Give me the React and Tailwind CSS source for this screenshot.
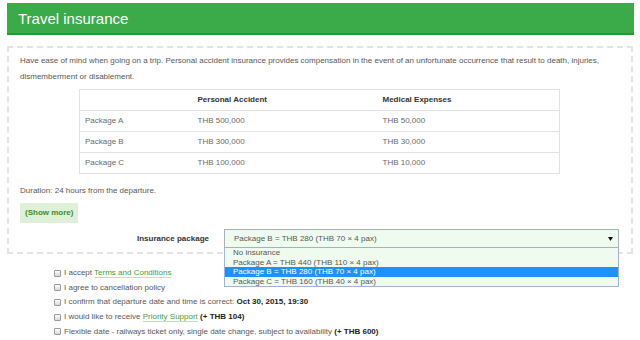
import React from "react";

const packages = [
  { name: "Package A", accident: "THB 500,000", medical: "THB 50,000" },
  { name: "Package B", accident: "THB 300,000", medical: "THB 30,000" },
  { name: "Package C", accident: "THB 100,000", medical: "THB 10,000" },
];

const options = [
  "No insurance",
  "Package A = THB 440 (THB 110 × 4 pax)",
  "Package B = THB 280 (THB 70 × 4 pax)",
  "Package C = THB 160 (THB 40 × 4 pax)",
];

const Check = () => (
  <span className="inline-block w-[7px] h-[7px] mr-[3px] border border-[#9a9a9a] rounded-[1px] bg-gradient-to-b from-white to-[#d8d8d8] shrink-0"></span>
);

const GreenLink = ({ children }) => (
  <span className="text-[#4a9a3e] border-b border-[#bfe0b8]">{children}</span>
);

const App = () => {
  const selected = 2;

  return (
    <div className="w-[640px] h-[340px] overflow-hidden bg-white pt-[3px] pl-[7px] font-['Liberation_Sans',Arial,sans-serif] text-[8px] text-[#585858]">
      {/* header */}
      <div className="w-[627px] h-[32px] bg-[#3bab4a] border-b-2 border-[#1c9f2d] pl-[11px] flex items-center">
        <h1 className="text-[15px] leading-none text-white">Travel insurance</h1>
      </div>

      {/* dashed info box */}
      <div className="w-[626px] mt-[11px] border-2 border-dashed border-[#e4e4e4] pl-[11px] pr-[12px] pt-[5px] pb-[4px]">
        <p className="leading-[16px]">
          Have ease of mind when going on a trip. Personal accident insurance provides compensation in the event of an
          unfortunate occurrence that result to death, injuries, dismemberment or disablement.
        </p>

        <table className="mt-[4px] mx-auto w-[481px] border border-[#e2e2e2] border-collapse">
          <tbody>
            <tr className="h-[21px] border-b border-[#e2e2e2]">
              <td className="w-[113px]"></td>
              <td className="w-[185px] pl-[5px] font-bold text-[#333]">Personal Accident</td>
              <td className="pl-[5px] font-bold text-[#333]">Medical Expenses</td>
            </tr>
            {packages.map((p, i) => (
              <tr key={i} className="h-[21px] border-b border-[#e2e2e2] text-[#6a6a6a]">
                <td className="pl-[5px]">{p.name}</td>
                <td className="pl-[5px]">{p.accident}</td>
                <td className="pl-[5px]">{p.medical}</td>
              </tr>
            ))}
          </tbody>
        </table>

        <p className="mt-[9px] leading-[16px]">Duration: 24 hours from the departure.</p>

        <div className="mt-[4px]">
          <span className="inline-block h-[20px] leading-[20px] px-[5px] bg-[#dff0d8] font-bold text-[#3c8d1f]">
            (Show more)
          </span>
        </div>

        <div className="mt-[6px] flex items-center">
          <div className="w-[189px] text-right font-bold text-[#333]">Insurance package</div>
          <div className="relative ml-[15px] w-[395px]">
            <div className="h-[19px] border border-[#a8b0b8] bg-[#effbee] pl-[9px] pr-[5px] flex items-center justify-between">
              <span>{options[selected]}</span>
              <svg width="5" height="4" viewBox="0 0 5 4">
                <path d="M0 0H5L2.5 4Z" fill="#111" />
              </svg>
            </div>
            <div className="absolute left-0 right-0 top-full z-10 border border-t-0 border-[#9fb4d6] bg-[#effbee]">
              {options.map((o, i) => (
                <div
                  key={i}
                  className={`h-[9.6px] leading-[9.6px] pl-[8px] ${
                    i === selected ? "bg-[#1e90ff] text-white" : ""
                  }`}
                >
                  {o}
                </div>
              ))}
            </div>
          </div>
        </div>
      </div>

      {/* checkboxes */}
      <div className="mt-[12px] pl-[47px]">
        <div className="h-[14.6px] flex items-center">
          <Check />
          <span>
            I accept <GreenLink>Terms and Conditions</GreenLink>
          </span>
        </div>
        <div className="h-[14.6px] flex items-center">
          <Check />
          <span>I agree to cancellation policy</span>
        </div>
        <div className="h-[14.6px] flex items-center">
          <Check />
          <span>
            I confirm that departure date and time is correct:{" "}
            <b className="text-[#222]">Oct 30, 2015, 19:30</b>
          </span>
        </div>
        <div className="h-[14.6px] flex items-center">
          <Check />
          <span>
            I would like to receive <GreenLink>Priority Support</GreenLink>{" "}
            <b className="text-[#222]">(+ THB 104)</b>
          </span>
        </div>
        <div className="h-[14.6px] flex items-center">
          <Check />
          <span>
            Flexible date - railways ticket only, single date change, subject to availability{" "}
            <b className="text-[#222]">(+ THB 600)</b>
          </span>
        </div>
      </div>
    </div>
  );
};

export default App;
